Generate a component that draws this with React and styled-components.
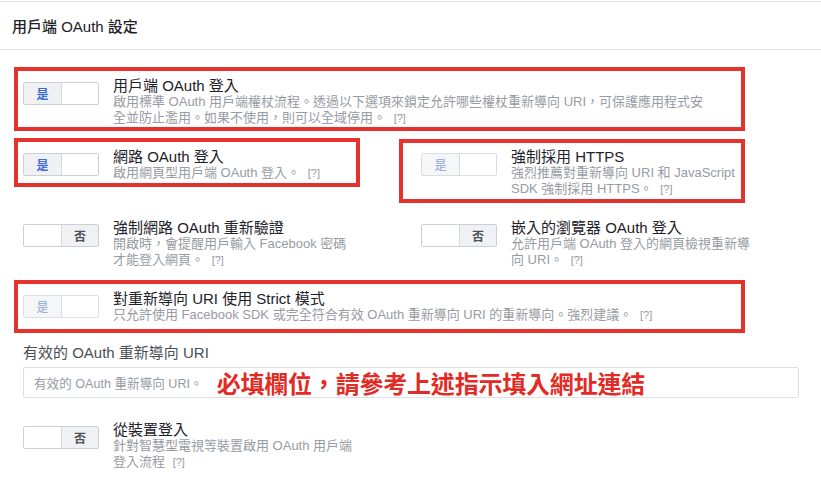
import styled, { createGlobalStyle } from 'styled-components';

const GlobalStyle = createGlobalStyle`
  body {
    margin: 0;
    background: #ffffff;
    font-family: "Liberation Sans", "Noto Sans CJK TC", sans-serif;
    -webkit-font-smoothing: antialiased;
  }
`;

const Card = styled.div`
  margin-top: 1px;
  border-top: 1px solid #e3e4e7;
  background: #fff;
  width: 821px;
`;

const Header = styled.div`
  height: 47px;
  display: flex;
  align-items: center;
  padding-left: 12px;
  border-bottom: 1px solid #e3e4e7;
`;

const HeaderTitle = styled.h2`
  margin: 0;
  font-size: 15px;
  font-weight: 500;
  color: #1d2129;
`;

const Body = styled.div`
  padding: 28px 0 40px 23px;
`;

const Grid = styled.div`
  display: grid;
  grid-template-columns: 376px 376px;
  column-gap: 22px;
  row-gap: 23px;
  align-items: start;
`;

const Item = styled.div`
  position: relative;
  display: flex;
  gap: 14px;
  align-items: flex-start;
  grid-column: ${({ $full }) => ($full ? 'span 2' : 'auto')};
`;

// red annotation frame drawn over a setting
const Highlight = styled.span`
  position: absolute;
  top: ${({ $box }) => $box.top}px;
  right: ${({ $box }) => $box.right}px;
  bottom: ${({ $box }) => $box.bottom}px;
  left: ${({ $box }) => $box.left}px;
  border: 4px solid #e5322d;
  pointer-events: none;
`;

const Toggle = styled.div`
  flex: none;
  margin-top: 4px;
  width: 76px;
  height: 23px;
  box-sizing: border-box;
  display: grid;
  grid-template-columns: 1fr 1fr;
  border: 1px solid ${({ $disabled }) => ($disabled ? '#dadde1' : '#ccd0d5')};
  border-radius: 2px;
  overflow: hidden;
`;

const Segment = styled.span`
  display: flex;
  align-items: center;
  justify-content: center;
  font-size: 12px;
  background: ${({ $active, $disabled }) =>
    $active ? ($disabled ? '#f5f6f8' : '#eff1f4') : '#ffffff'};
  color: ${({ $tone, $disabled }) =>
    $tone === 'yes' ? ($disabled ? '#8fa7d6' : '#3f6ad8') : '#4b4f56'};
  font-weight: ${({ $disabled }) => ($disabled ? 400 : 700)};
  & + & {
    border-left: 1px solid ${({ $disabled }) => ($disabled ? '#e4e6ea' : '#d6d9dd')};
  }
`;

const TextBlock = styled.div`
  max-width: ${({ $full }) => ($full ? '596px' : '242px')};
`;

const Title = styled.div`
  font-size: 15px;
  line-height: 16px;
  color: #1d2129;
`;

const Desc = styled.div`
  font-size: 13px;
  line-height: 16px;
  color: #979ba3;
`;

const Help = styled.span`
  margin-left: 4px;
  font-size: 11px;
  line-height: 1;
`;

const Label = styled.div`
  margin-top: 21px;
  font-size: 15px;
  line-height: 18px;
  color: #4b4f56;
`;

const Field = styled.div`
  margin-top: 5px;
  width: 776px;
  height: 31px;
  box-sizing: border-box;
  border: 1px solid #dddfe2;
  border-radius: 2px;
  display: flex;
  align-items: center;
  padding-left: 10px;
`;

const Placeholder = styled.span`
  font-size: 12.6px;
  color: #979ba3;
`;

const Annotation = styled.span`
  margin-left: 14px;
  font-size: 24px;
  font-weight: 700;
  color: #e32b26;
  letter-spacing: -0.2px;
`;

const LastRow = styled.div`
  margin-top: 24px;
`;

function Switch({ value, disabled }) {
  const on = value === 'yes';
  return (
    <Toggle $disabled={disabled}>
      <Segment $active={on} $tone="yes" $disabled={disabled}>{on ? '是' : ''}</Segment>
      <Segment $active={!on} $tone="no" $disabled={disabled}>{on ? '' : '否'}</Segment>
    </Toggle>
  );
}

function Setting({ title, desc, value, disabled, full, box }) {
  return (
    <Item $full={full}>
      <Switch value={value} disabled={disabled} />
      <TextBlock $full={full}>
        <Title>{title}</Title>
        <Desc>
          {desc} <Help>[?]</Help>
        </Desc>
      </TextBlock>
      {box && <Highlight $box={box} />}
    </Item>
  );
}

export default function App() {
  return (
    <>
      <GlobalStyle />
      <Card>
        <Header>
          <HeaderTitle>用戶端 OAuth 設定</HeaderTitle>
        </Header>
        <Body>
          <Grid>
            <Setting
              full
              value="yes"
              title="用戶端 OAuth 登入"
              desc="啟用標準 OAuth 用戶端權杖流程。透過以下選項來鎖定允許哪些權杖重新導向 URI，可保護應用程式安全並防止濫用。如果不使用，則可以全域停用。"
              box={{ top: -11, right: 52, bottom: -5, left: -9 }}
            />
            <Setting
              value="yes"
              title="網路 OAuth 登入"
              desc="啟用網頁型用戶端 OAuth 登入。"
              box={{ top: -11, right: 39, bottom: -6, left: -9 }}
            />
            <Setting
              value="yes"
              disabled
              title="強制採用 HTTPS"
              desc="強烈推薦對重新導向 URI 和 JavaScript SDK 強制採用 HTTPS。"
              box={{ top: -10, right: 52, bottom: -6, left: -22 }}
            />
            <Setting
              value="no"
              title="強制網路 OAuth 重新驗證"
              desc="開啟時，會提醒用戶輸入 Facebook 密碼才能登入網頁。"
            />
            <Setting
              value="no"
              title="嵌入的瀏覽器 OAuth 登入"
              desc="允許用戶端 OAuth 登入的網頁檢視重新導向 URI。"
            />
            <Setting
              full
              value="yes"
              disabled
              title="對重新導向 URI 使用 Strict 模式"
              desc="只允許使用 Facebook SDK 或完全符合有效 OAuth 重新導向 URI 的重新導向。強烈建議。"
              box={{ top: -11, right: 52, bottom: -10, left: -9 }}
            />
          </Grid>
          <Label>有效的 OAuth 重新導向 URI</Label>
          <Field>
            <Placeholder>有效的 OAuth 重新導向 URI。</Placeholder>
            <Annotation>必填欄位，請參考上述指示填入網址連結</Annotation>
          </Field>
          <LastRow>
            <Setting
              value="no"
              title="從裝置登入"
              desc="針對智慧型電視等裝置啟用 OAuth 用戶端登入流程"
            />
          </LastRow>
        </Body>
      </Card>
    </>
  );
}
